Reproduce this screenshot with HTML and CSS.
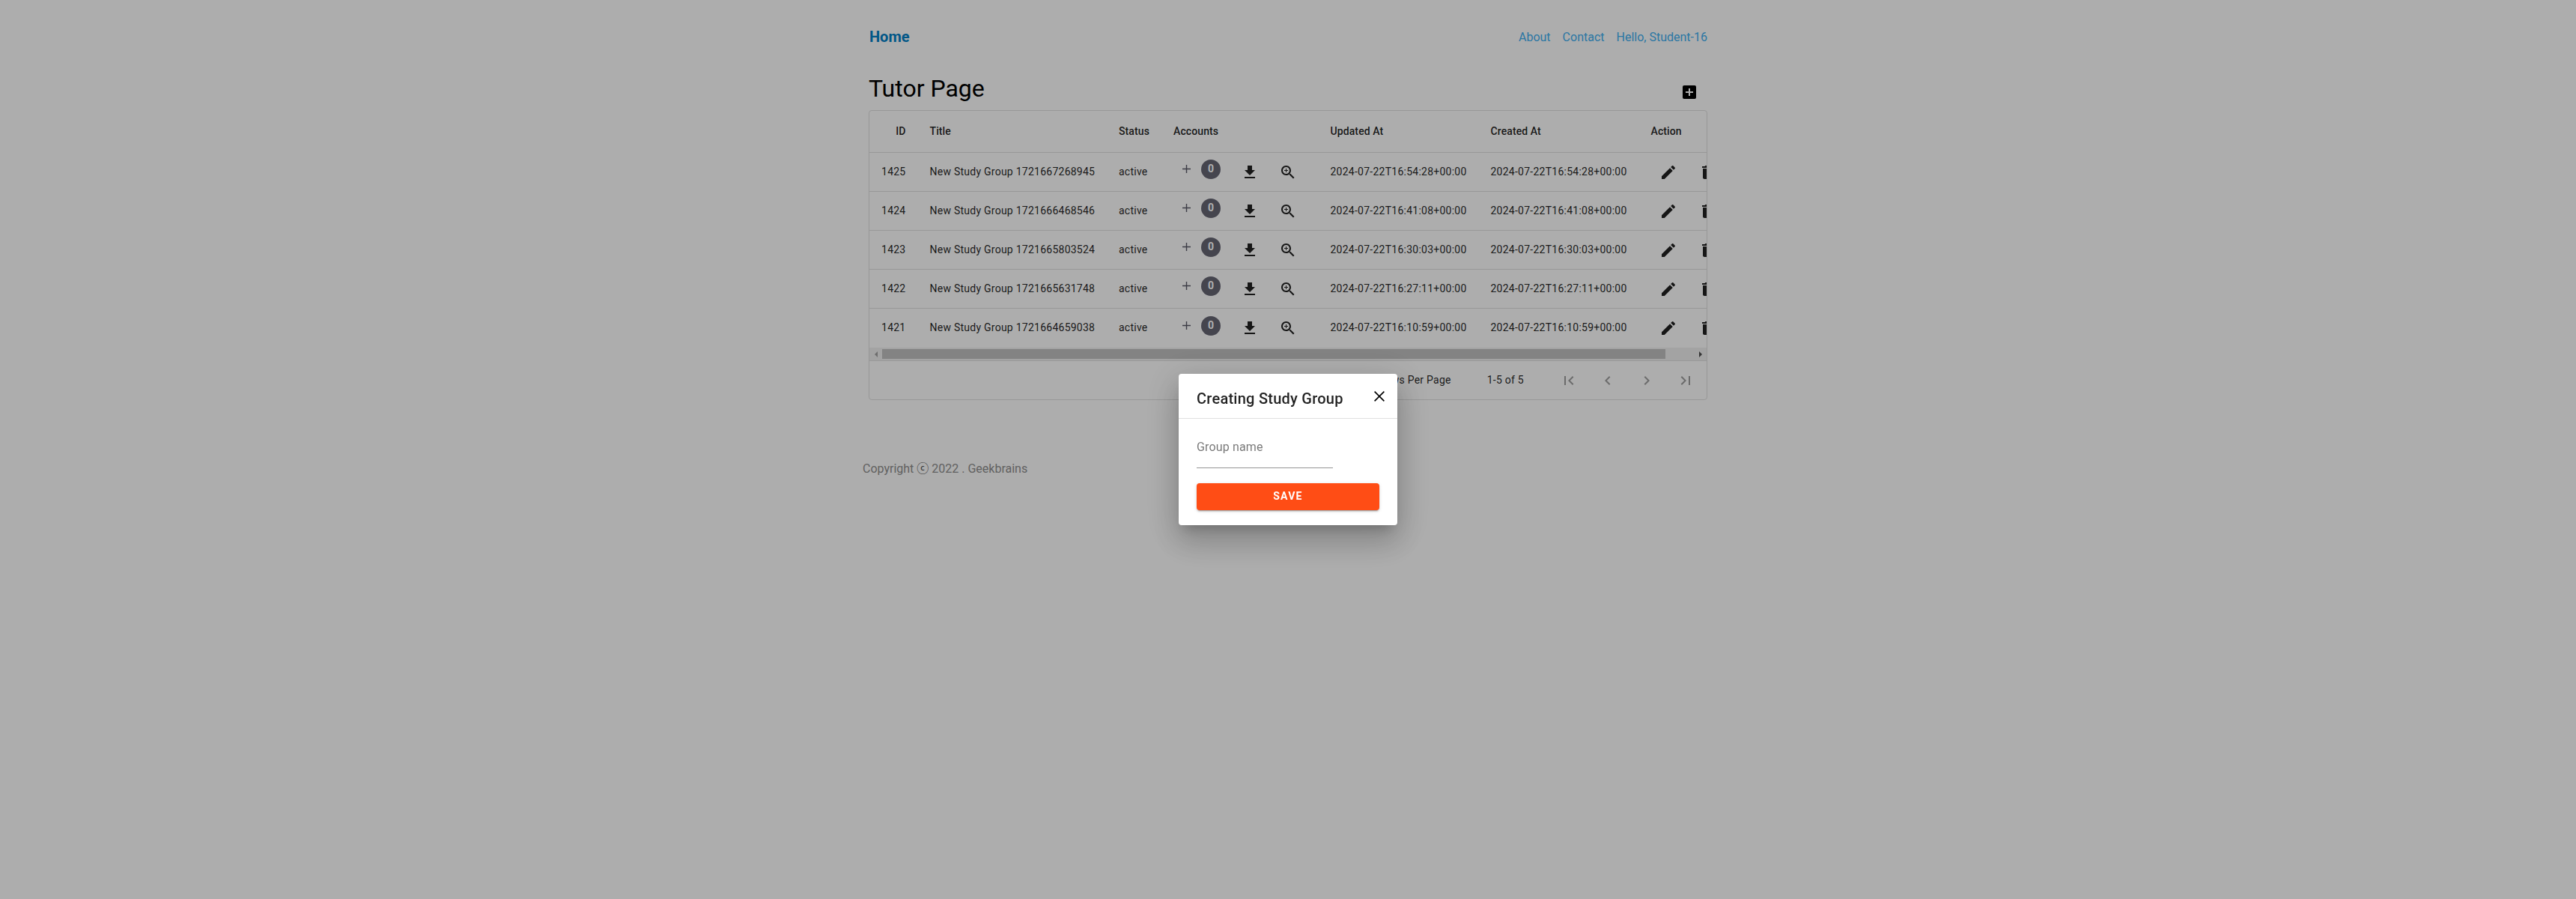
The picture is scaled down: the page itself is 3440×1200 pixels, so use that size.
FILE: index.html
```html
<!DOCTYPE html>
<html lang="en">
<head>
<meta charset="utf-8">
<title>Tutor Page</title>
<link rel="stylesheet" href="styles.css">
</head>
<body>
<svg class="sprite" aria-hidden="true">
  <symbol id="add" viewBox="0 0 11 11"><path d="M4.8 0h1.4v4.8H11v1.4H6.2V11H4.8V6.200H0V4.800h4.800z"/></symbol>
  <symbol id="download" viewBox="0 0 24 24"><path d="M19 9h-4V3H9v6H5l7 7 7-7zM5 18v2h14v-2H5z"/></symbol>
  <symbol id="zoom" viewBox="0 0 24 24"><path d="M15.5 14h-.79l-.28-.27C15.41 12.59 16 11.11 16 9.5 16 5.91 13.09 3 9.5 3S3 5.91 3 9.5 5.91 16 9.5 16c1.61 0 3.09-.59 4.23-1.57l.27.28v.79l5 4.99L20.49 19l-4.99-5zm-6 0C7.01 14 5 11.99 5 9.5S7.01 5 9.5 5 14 7.01 14 9.5 11.99 14 9.5 14zm.5-7H9v2H7v1h2v2h1v-2h2V9h-2V7z"/></symbol>
  <symbol id="edit" viewBox="0 0 24 24"><path d="M3 17.25V21h3.75L17.81 9.94l-3.75-3.75L3 17.25zM20.71 7.04a1 1 0 0 0 0-1.41l-2.34-2.34a1 1 0 0 0-1.41 0l-1.83 1.83 3.75 3.75 1.83-1.83z"/></symbol>
  <symbol id="delete" viewBox="0 0 24 24"><path d="M6 19c0 1.100.9 2 2 2h8c1.100 0 2-.9 2-2V7H6v12zM19 4h-3.500l-1-1h-5l-1 1H5v2h14V4z"/></symbol>
  <symbol id="add-box" viewBox="0 0 24 24"><path d="M19 3H5a2 2 0 0 0-2 2v14a2 2 0 0 0 2 2h14a2 2 0 0 0 2-2V5a2 2 0 0 0-2-2zm-2 10h-4v4h-2v-4H7v-2h4V7h2v4h4v2z"/></symbol>
  <symbol id="first" viewBox="0 0 24 24"><path d="M18.410 16.590L13.820 12l4.590-4.590L17 6l-6 6 6 6zM6 6h2v12H6z"/></symbol>
  <symbol id="prev" viewBox="0 0 24 24"><path d="M15.410 7.410L14 6l-6 6 6 6 1.410-1.410L10.830 12z"/></symbol>
  <symbol id="next" viewBox="0 0 24 24"><path d="M10 6L8.590 7.410 13.170 12l-4.580 4.590L10 18l6-6z"/></symbol>
  <symbol id="last" viewBox="0 0 24 24"><path d="M5.590 7.410L10.180 12l-4.590 4.590L7 18l6-6-6-6zM16 6h2v12h-2z"/></symbol>
</svg>

<header class="topbar">
  <a class="home">Home</a>
  <nav class="nav"><a>About</a><a>Contact</a><a>Hello, Student-16</a></nav>
</header>

<main class="page">
  <div class="heading">
    <h1>Tutor Page</h1>
    <button class="icon-btn"><svg class="icon"><use href="#add-box"/></svg></button>
  </div>

  <section class="data-table">
    <div class="viewport">
      <table>
        <colgroup><col class="c-id"><col class="c-title"><col class="c-status"><col class="c-accounts"><col class="c-date"><col class="c-date"><col class="c-action"></colgroup>
        <thead>
          <tr><th class="num">ID</th><th>Title</th><th>Status</th><th>Accounts</th><th>Updated At</th><th>Created At</th><th>Action</th></tr>
        </thead>
        <tbody id="rows"></tbody>
      </table>
    </div>
    <div class="scrollbar"><i class="arrow left"></i><div class="track"><div class="thumb"></div></div><i class="arrow right"></i></div>
    <footer class="pagination">
      <span class="per-page">Rows Per Page</span>
      <span class="total">1-5 of 5</span>
      <div class="pager">
        <button class="icon-btn"><svg class="icon"><use href="#first"/></svg></button>
        <button class="icon-btn"><svg class="icon"><use href="#prev"/></svg></button>
        <button class="icon-btn"><svg class="icon"><use href="#next"/></svg></button>
        <button class="icon-btn"><svg class="icon"><use href="#last"/></svg></button>
      </div>
    </footer>
  </section>
</main>

<footer class="copyright">Copyright <span class="mark">ⓒ</span> 2022 . Geekbrains</footer>

<div class="scrim">
  <div class="dialog" role="dialog">
    <div class="dialog-head">
      <h2>Creating Study Group</h2>
      <button class="close"><svg viewBox="0 0 14 14"><path d="M.6.600l12.800 12.800M13.400.600L.6 13.400"/></svg></button>
    </div>
    <form class="dialog-body">
      <label class="field">Group name</label>
      <button type="button" class="save">Save</button>
    </form>
  </div>
</div>
<script src="rows.js"></script>
</body>
</html>
```
FILE: styles.css
```css
* { box-sizing: border-box; }
body { margin: 0; background: #fff; font-family: Roboto, "Liberation Sans", sans-serif; color: #000; }
button { border: 0; background: none; padding: 0; color: inherit; font: inherit; }
.sprite { display: none; }
.icon { width: 24px; height: 24px; fill: currentColor; display: block; }
.icon-btn { width: 48px; height: 48px; display: flex; align-items: center; justify-content: center; flex: none; }

.topbar { width: 1120px; margin: 0 auto; height: 96px; display: flex; justify-content: space-between; align-items: flex-start; }
.home { padding: 37px 0 0 1px; font-size: 20px; line-height: 24px; font-weight: 700; color: #0280c8; }
.nav { padding-top: 38px; display: flex; gap: 16px; font-size: 16px; line-height: 24px; color: #3eb0f2; }

.page { width: 1120px; margin: 0 auto; }
.heading { height: 51px; display: flex; justify-content: space-between; align-items: flex-start; }
.heading h1 { margin: 0; font-size: 32px; line-height: 44px; font-weight: 400; }
.heading .icon-btn { margin-top: 3px; }

.data-table { border: 1px solid #e0e0e0; border-radius: 4px; overflow: hidden; }
.viewport { overflow: hidden; }
table { width: 1159px; table-layout: fixed; border-collapse: separate; border-spacing: 0; }
.c-id { width: 64.5px; }
.c-title { width: 252.5px; }
.c-status { width: 73px; }
.c-accounts { width: 209.5px; }
.c-date { width: 214px; }
.c-action { width: 131.5px; }
th, td { padding: 0 16px; text-align: left; white-space: nowrap; font-size: 14px; letter-spacing: .25px; color: rgba(0,0,0,.87); overflow: hidden; }
th { height: 55px; padding-bottom: 2px; font-weight: 500; letter-spacing: .1px; }
td { height: 52px; padding-bottom: 2px; border-top: 1px solid #e0e0e0; font-weight: 400; }
tr:last-child td { height: 53px; }
.num { text-align: right; }
.tools { display: flex; align-items: center; gap: 3px; height: 48px; }
.tools.actions { gap: 4px; margin-left: -1px; }
.tools .icon { margin-top: 2px; }
.add { width: 11px; height: 11px; fill: #5a5a68; margin: -6px 0 0 12px; }
.badge { width: 26px; height: 26px; margin: -5px 11.5px 0 11px; border-radius: 50%; background: #666674; color: #fff; font-size: 14px; font-weight: 700; line-height: 25px; text-align: center; letter-spacing: 0; }

.scrollbar { height: 17px; display: flex; align-items: center; background: #f1f1f1; }
.track { flex: 1; }
.thumb { width: 1046px; height: 13px; background: #c1c1c1; }
.arrow { width: 17px; height: 17px; display: flex; align-items: center; justify-content: center; }
.arrow::before { content: ""; border: 4px solid transparent; }
.left::before { border-left-width: 0; border-right-color: #a3a3a3; }
.right::before { border-right-width: 0; border-left-color: #505050; }

.pagination { height: 52px; border-top: 1px solid #e0e0e0; display: flex; justify-content: flex-end; align-items: center; padding-right: 4px; font-size: 14px; letter-spacing: .25px; color: rgba(0,0,0,.87); }
.per-page, .total { padding-bottom: 2px; }
.total { margin: 0 36px 0 48px; }
.pager { display: flex; gap: 4px; color: rgba(0,0,0,.38); }
.pager .icon { margin-top: 1px; }

.copyright { width: 1136px; margin: 80px auto 0; font-size: 16px; line-height: 24px; color: #8f8f8f; }
.mark { font-family: "Noto Sans CJK JP", sans-serif; line-height: 1; color: #505050; }

.scrim { position: fixed; inset: 0; background: rgba(0,0,0,.32); display: flex; align-items: center; justify-content: center; }
.dialog { width: 292px; height: 202px; border-radius: 4px; background: #fff; box-shadow: 0 11px 15px -7px rgba(0,0,0,.2), 0 24px 38px 3px rgba(0,0,0,.14), 0 9px 46px 8px rgba(0,0,0,.12); }
.dialog-head { height: 60px; padding: 0 17px 0 24px; display: flex; justify-content: space-between; align-items: flex-start; border-bottom: 1px solid #e0e0e0; }
.dialog-head h2 { margin: 17px 0 0; font-size: 20px; line-height: 32px; font-weight: 500; letter-spacing: .25px; color: rgba(0,0,0,.87); }
.close { margin-top: 23px; width: 14px; height: 14px; }
.close svg { display: block; width: 14px; height: 14px; stroke: #000; stroke-width: 1.6; }
.dialog-body { padding: 10px 24px 0; }
.field { display: flex; align-items: center; width: 182px; height: 56px; border-bottom: 1px solid #949494; font-size: 16px; letter-spacing: .15px; color: rgba(0,0,0,.54); }
.save { display: block; width: 100%; height: 36px; margin-top: 20px; padding-bottom: 2px; border-radius: 4px; background: #ff4d15; color: #fff; font-size: 14px; font-weight: 700; letter-spacing: 1.25px; text-transform: uppercase; box-shadow: 0 3px 1px -2px rgba(0,0,0,.2), 0 2px 2px rgba(0,0,0,.14), 0 1px 5px rgba(0,0,0,.12); }
```
FILE: rows.js
```js
const groups = [
  [1425, "1721667268945", "16:54:28"],
  [1424, "1721666468546", "16:41:08"],
  [1423, "1721665803524", "16:30:03"],
  [1422, "1721665631748", "16:27:11"],
  [1421, "1721664659038", "16:10:59"],
];
const button = name => `<button class="icon-btn"><svg class="icon"><use href="#${name}"/></svg></button>`;
document.getElementById("rows").innerHTML = groups.map(([id, stamp, time]) => `
  <tr><td class="num">${id}</td><td>New Study Group ${stamp}</td><td>active</td>
  <td><div class="tools"><svg class="add"><use href="#add"/></svg><span class="badge">0</span>${button("download")}${button("zoom")}</div></td>
  <td>2024-07-22T${time}+00:00</td><td>2024-07-22T${time}+00:00</td>
  <td><div class="tools actions">${button("edit")}${button("delete")}</div></td></tr>`).join("");
```
